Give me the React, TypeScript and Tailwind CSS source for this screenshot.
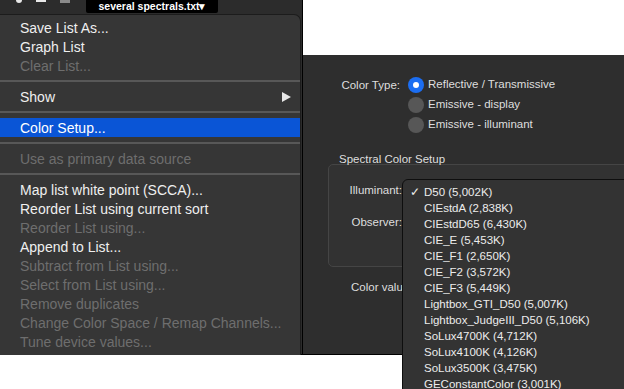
const font = { fontFamily: '"Liberation Sans", Arial, sans-serif' };

type MenuEntry = { label: string; disabled?: boolean; active?: boolean; submenu?: boolean } | "sep";

const menu: MenuEntry[] = [
  { label: "Save List As..." },
  { label: "Graph List" },
  { label: "Clear List...", disabled: true },
  "sep",
  { label: "Show", submenu: true },
  "sep",
  { label: "Color Setup...", active: true },
  "sep",
  { label: "Use as primary data source", disabled: true },
  "sep",
  { label: "Map list white point (SCCA)..." },
  { label: "Reorder List using current sort" },
  { label: "Reorder List using...", disabled: true },
  { label: "Append to List..." },
  { label: "Subtract from List using...", disabled: true },
  { label: "Select from List using...", disabled: true },
  { label: "Remove duplicates", disabled: true },
  { label: "Change Color Space / Remap Channels...", disabled: true },
  { label: "Tune device values...", disabled: true },
];

const illuminants = [
  "D50 (5,002K)",
  "CIEstdA (2,838K)",
  "CIEstdD65 (6,430K)",
  "CIE_E (5,453K)",
  "CIE_F1 (2,650K)",
  "CIE_F2 (3,572K)",
  "CIE_F3 (5,449K)",
  "Lightbox_GTI_D50 (5,007K)",
  "Lightbox_JudgeIII_D50 (5,106K)",
  "SoLux4700K (4,712K)",
  "SoLux4100K (4,126K)",
  "SoLux3500K (3,475K)",
  "GEConstantColor (3,001K)",
];

function Radio({ on, label }: { on?: boolean; label: string }) {
  return (
    <div className="flex items-center h-[20px]">
      {on ? (
        <span className="w-[16px] h-[16px] rounded-full bg-[#1c6ef2] flex items-center justify-center">
          <span className="w-[6px] h-[6px] rounded-full bg-white" />
        </span>
      ) : (
        <span className="w-[16px] h-[16px] rounded-full bg-[#575757]" />
      )}
      <span className="ml-[4px] text-[11.5px] text-[#dedede]">{label}</span>
    </div>
  );
}

export default function App() {
  return (
    <div className="relative w-[624px] h-[389px] bg-white overflow-hidden" style={font}>
      {/* window behind the menu */}
      <div className="absolute left-0 top-0 w-[303px] h-[355px] bg-[#2c2c2c] border-r border-b border-black">
        <div className="flex items-start h-[14px]">
          <div className="flex items-start gap-[14px] pl-[16px] w-[86px]">
            <span className="w-[6px] h-[3px] bg-[#e8e8e8] rounded-b-full" />
            <span className="w-[10px] h-[2px] bg-[#e8e8e8]" />
            <span className="w-[10px] h-[3px] bg-[#8a8a8a]" />
          </div>
          <div className="h-[13px] w-[132px] bg-black rounded-b-[2px] flex items-center justify-center text-[10.5px] font-bold text-white leading-none">
            several spectrals.txt▾
          </div>
        </div>
      </div>

      {/* Color setup dialog */}
      <div className="absolute left-[303px] top-[55px] w-[321px] h-[300px] bg-[#2e2e2e] border-b border-black">
        <div className="flex pt-[20px]">
          <div className="w-[97px] text-right text-[11.5px] text-[#dedede] leading-[20px]">Color Type:</div>
          <div className="ml-[8px] flex flex-col">
            <Radio on label="Reflective / Transmissive" />
            <Radio label="Emissive - display" />
            <Radio label="Emissive - illuminant" />
          </div>
        </div>
        <div className="mt-[17px] pl-[36px] text-[11.5px] text-[#dedede] leading-[14px]">Spectral Color Setup</div>
        <div className="ml-[25px] mt-[-2px] w-[320px] h-[103px] rounded-[5px] border border-[#454545] bg-[#323232]">
          <div className="w-[73px] text-right text-[11.5px] text-[#dedede] mt-[17px] leading-[16px]">Illuminant:</div>
          <div className="w-[73px] text-right text-[11.5px] text-[#dedede] mt-[16px] leading-[16px]">Observer:</div>
        </div>
        <div className="pl-[48px] mt-[12px] text-[11.5px] text-[#dedede] leading-[16px]">Color values:</div>
      </div>

      {/* File menu */}
      <div className="absolute left-0 top-[14px] w-[301px] h-[341px] bg-[#363636] rounded-tr-[7px] border-t border-r border-[#1c1c1c] pt-[3px]">
        {menu.map((m, i) =>
          m === "sep" ? (
            <div key={i} className="h-[12px] flex items-center">
              <div className="w-full h-[2px] bg-[#585858]" />
            </div>
          ) : (
            <div
              key={i}
              className={`h-[19px] flex items-center pl-[20px] pr-[9px] text-[14px] leading-none ${
                m.active ? "bg-[#0a55d6] text-white" : m.disabled ? "text-[#6e6e6e]" : "text-[#efefef]"
              }`}
            >
              <span className="flex-1">{m.label}</span>
              {m.submenu && (
                <svg width="9" height="10" viewBox="0 0 9 10">
                  <path d="M0 0 L9 5 L0 10 Z" fill="#e6e6e6" />
                </svg>
              )}
            </div>
          )
        )}
      </div>

      {/* Illuminant popup */}
      <div className="absolute left-[402px] top-[179px] w-[240px] h-[230px] bg-[#333333] border border-[#0e0e0e] rounded-tl-[6px] pt-[5px]">
        {illuminants.map((name, i) => (
          <div key={name} className="h-[16px] flex items-center text-[11.5px] text-[#ececec]">
            <span className="w-[21px] pl-[7px]">{i === 0 ? "✓" : ""}</span>
            <span>{name}</span>
          </div>
        ))}
      </div>
    </div>
  );
}
